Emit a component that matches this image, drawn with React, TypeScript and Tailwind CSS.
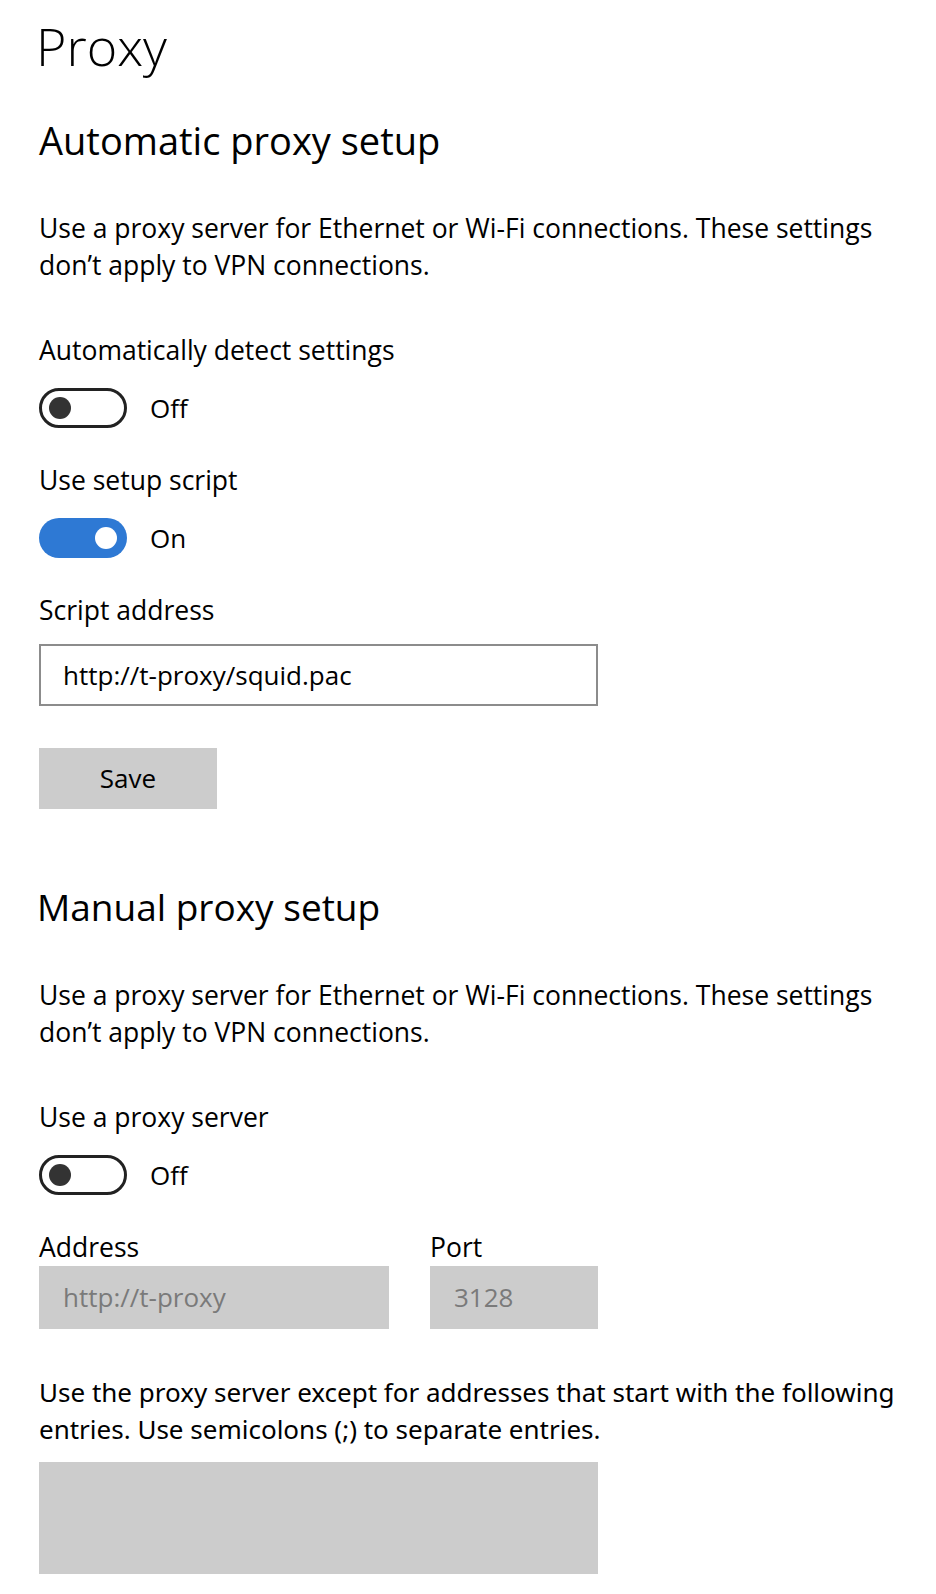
const font = "[font-family:'Open_Sans',sans-serif]";

function Toggle({ on }: { on: boolean }) {
	return (
		<div className="mt-[19px] flex items-center h-[40px]">
			{on ? (
				<div className="w-[88px] h-[40px] rounded-full bg-[#2e79d4] flex items-center justify-end pr-[10px]">
					<div className="w-[22px] h-[22px] rounded-full bg-white" />
				</div>
			) : (
				<div className="w-[88px] h-[40px] rounded-full border-[3px] border-[#222] flex items-center pl-[7px]">
					<div className="w-[22px] h-[22px] rounded-full bg-[#333]" />
				</div>
			)}
			<span className="ml-[23px] text-[26px] text-black">{on ? "On" : "Off"}</span>
		</div>
	);
}

function Label({ children, className = "" }: { children: React.ReactNode; className?: string }) {
	return <div className={`text-[26.5px] leading-[37px] text-black ${className}`}>{children}</div>;
}

export default function App() {
	return (
		<div className={`min-h-screen w-full bg-white pl-[39px] pt-[14px] pb-[20px] ${font}`}>
			<h1 className="text-[52px] leading-[64px] font-light text-black -ml-[3px]">Proxy</h1>

			<h2 className="mt-[38px] text-[38px] leading-[48px] text-black">Automatic proxy setup</h2>
			<Label className="mt-[46px]">
				Use a proxy server for Ethernet or Wi-Fi connections. These settings
				<br />
				don’t apply to VPN connections.
			</Label>

			<Label className="mt-[48px]">Automatically detect settings</Label>
			<Toggle on={false} />

			<Label className="mt-[34px]">Use setup script</Label>
			<Toggle on={true} />

			<Label className="mt-[34px]">Script address</Label>
			<div className="mt-[15px] w-[559px] h-[62px] border-2 border-[#8c8c8c] flex items-center pl-[22px] text-[26px] text-black">
				http://t-proxy/squid.pac
			</div>

			<button className="mt-[42px] block w-[178px] h-[61px] bg-[#cccccc] text-[26px] text-black">Save</button>

			<h2 className="mt-[74px] text-[37px] leading-[48px] text-black -ml-[2px]">Manual proxy setup</h2>
			<Label className="mt-[46px]">
				Use a proxy server for Ethernet or Wi-Fi connections. These settings
				<br />
				don’t apply to VPN connections.
			</Label>

			<Label className="mt-[48px]">Use a proxy server</Label>
			<Toggle on={false} />

			<div className="mt-[34px] flex gap-[41px]">
				<div className="flex flex-col">
					<Label>Address</Label>
					<div className="w-[350px] h-[63px] bg-[#cccccc] flex items-center pl-[24px] text-[26px] text-[#7a7a7a]">
						http://t-proxy
					</div>
				</div>
				<div className="flex flex-col">
					<Label>Port</Label>
					<div className="w-[168px] h-[63px] bg-[#cccccc] flex items-center pl-[24px] text-[26px] text-[#7a7a7a]">
						3128
					</div>
				</div>
			</div>

			<div className="mt-[45px] text-[26px] leading-[37px] text-black [font-family:'Noto_Sans',sans-serif] font-stretch-condensed">
				Use the proxy server except for addresses that start with the following
				<br />
				entries. Use semicolons (;) to separate entries.
			</div>
			<div className="mt-[14px] w-[559px] h-[112px] bg-[#cccccc]" />
		</div>
	);
}
